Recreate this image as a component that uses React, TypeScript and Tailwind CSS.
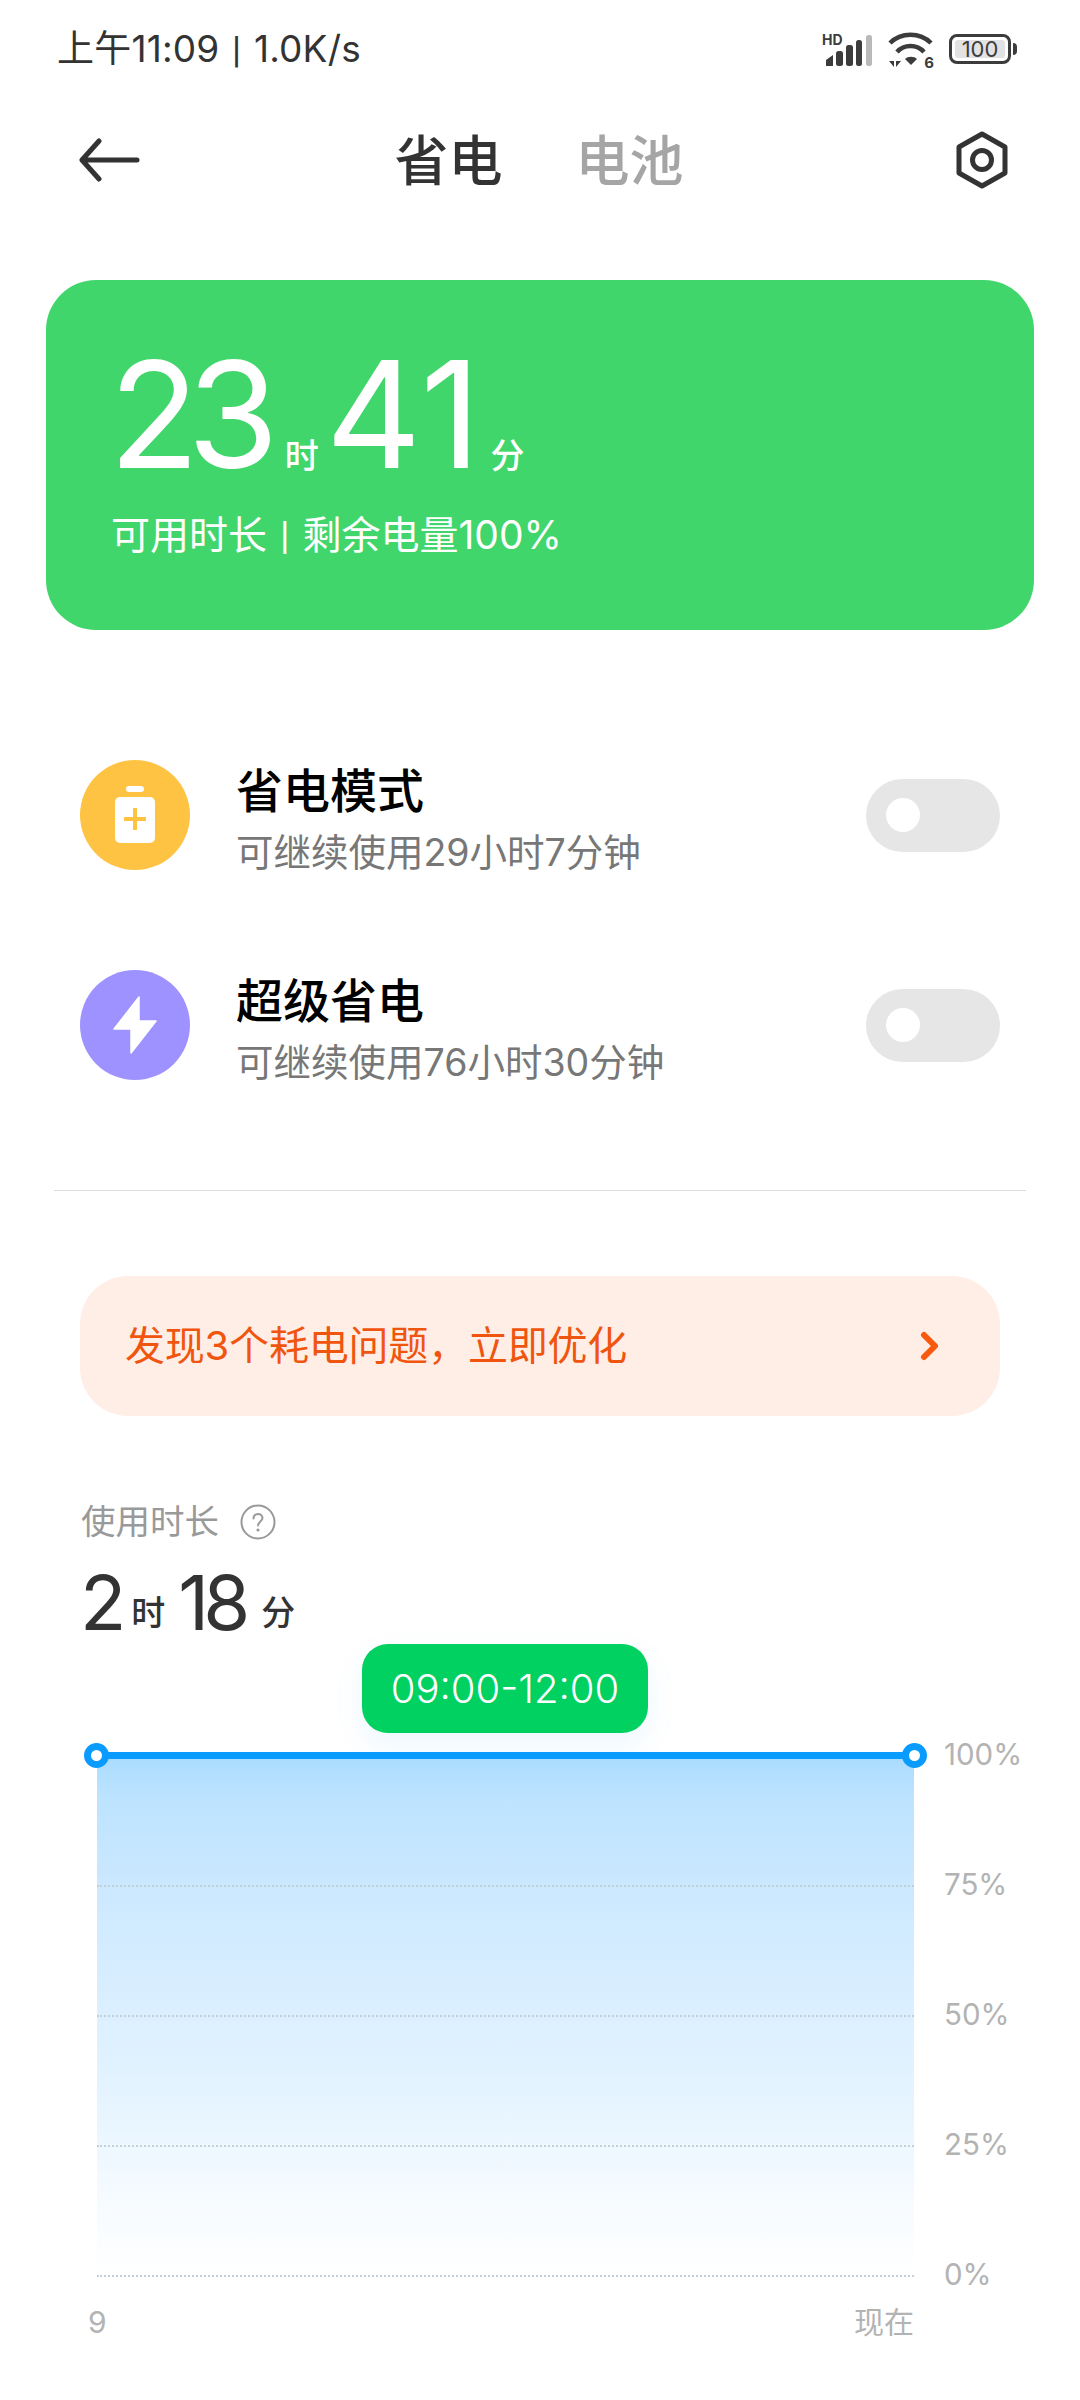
import React from "react";

const font = "font-['Inter','Noto_Sans_CJK_SC',sans-serif]";

function SignalIcon() {
  return (
    <svg width="48" height="31" viewBox="0 0 48 31" fill="none">
      <path d="M1 31V25L8 20V31Z" fill="#3c3c3c" />
      <rect x="11" y="16" width="7" height="15" rx="2.5" fill="#3c3c3c" />
      <rect x="21" y="10" width="7" height="21" rx="2.5" fill="#3c3c3c" />
      <rect x="31" y="5" width="6" height="26" rx="2.5" fill="#3c3c3c" />
      <rect x="41" y="0" width="6" height="31" rx="2.5" fill="#b9b9b9" />
    </svg>
  );
}

function WifiIcon() {
  return (
    <svg width="46" height="36" viewBox="0 0 46 36" fill="none">
      <path d="M2 11C13 0 32 0 43 11" stroke="#3c3c3c" strokeWidth="4.5" />
      <path d="M9 20C16 12 29 12 36 20" stroke="#3c3c3c" strokeWidth="4.5" />
      <path d="M17 27C20 24 26 24 29 27L23 33Z" fill="#3c3c3c" />
      <path d="M6 24V35L1 29H6ZM8 24V35L13 29H8Z" fill="#3c3c3c" />
    </svg>
  );
}

function Battery() {
  return (
    <div className="flex items-center gap-[2px]">
      <div className="flex h-[30px] w-[62px] items-center justify-center rounded-[8px] border-[3px] border-[#3c3c3c] p-[3px]">
        <div className="flex h-full w-full items-center justify-center rounded-[3px] bg-[#e2e2e2] text-[22px] leading-none text-[#3c3c3c]">
          100
        </div>
      </div>
      <div className="h-[12px] w-[4px] rounded-r-full bg-[#3c3c3c]" />
    </div>
  );
}

function Bar() {
  return <span className="mx-[2px] font-['Roboto'] font-normal">|</span>;
}

function StatusBar() {
  return (
    <div className="flex h-[98px] items-center justify-between pl-[57px] pr-[63px] text-[37px] text-[#333]">
      <span className="whitespace-pre tracking-[0.2px]">
        上午11:09 <Bar /> 1.0K/s
      </span>
      <div className="flex items-center">
        <div className="relative mr-[13px] mt-[3px] h-[31px] w-[50px]">
          <SignalIcon />
          <span className="absolute left-[-3px] top-[-3px] text-[14px] font-bold leading-[16px] text-[#3c3c3c]">HD</span>
        </div>
        <div className="relative mr-[15px] mt-[1px] h-[36px] w-[46px]">
          <WifiIcon />
          <span className="absolute bottom-[-2px] right-[0px] text-[15px] font-bold leading-none text-[#3c3c3c]">6</span>
        </div>
        <Battery />
      </div>
    </div>
  );
}

function Header() {
  return (
    <div className="relative flex h-[124px] items-center justify-center text-[54px] font-medium leading-none">
      <svg className="absolute left-[78px] top-[40px]" width="62" height="44" viewBox="0 0 62 44" fill="none">
        <path d="M59 22H4M21 3L4 22L21 41" stroke="#333" strokeWidth="5" strokeLinecap="round" strokeLinejoin="round" />
      </svg>
      <div className="mr-[2px] mt-[4px] flex gap-[73px]">
        <span className="text-[#333]">省电</span>
        <span className="text-[#a5a5a5]">电池</span>
      </div>
      <svg className="absolute left-[955px] top-[33px]" width="54" height="58" viewBox="0 0 54 58" fill="none">
        <path d="M27 3L50 16V42L27 55L4 42V16Z" stroke="#333" strokeWidth="5" strokeLinejoin="round" />
        <circle cx="27" cy="29" r="9.5" stroke="#333" strokeWidth="5" />
      </svg>
    </div>
  );
}

function BatteryCard() {
  return (
    <div className="mx-[46px] mt-[58px] h-[350px] rounded-[50px] bg-[#41d66b] pl-[63px] pt-[60px] text-white">
      <div className="flex h-[150px] items-end">
        <span className="text-[148px] font-normal leading-[150px] tracking-[-12px]">23</span>
        <span className="mb-[17px] ml-[18px] text-[34px] font-medium leading-none">时</span>
        <span className="ml-[7px] text-[148px] font-normal leading-[150px] tracking-[2px]">41</span>
        <span className="mb-[17px] ml-[8px] text-[34px] font-medium leading-none">分</span>
      </div>
      <p className="ml-[2px] mt-[20px] whitespace-pre text-[39px] leading-[50px]">
        可用时长 <Bar /> 剩余电量100%
      </p>
    </div>
  );
}

function SwitchOff() {
  return (
    <div className="flex h-[73px] w-[134px] items-center rounded-full bg-[#e6e6e6] pl-[20px]">
      <div className="h-[34px] w-[34px] rounded-full bg-white" />
    </div>
  );
}

function ModeRow({ icon, color, title, sub }: { icon: React.ReactNode; color: string; title: string; sub: string }) {
  return (
    <div className="flex h-[210px] items-center pl-[80px] pr-[80px]">
      <div className={`flex h-[110px] w-[110px] items-center justify-center rounded-full ${color}`}>{icon}</div>
      <div className="ml-[46px] flex-1 pt-[8px]">
        <p className="text-[47px] font-medium leading-[62px] text-black">{title}</p>
        <p className="mt-[6px] text-[37.5px] leading-[50px] text-[#777]">{sub}</p>
      </div>
      <SwitchOff />
    </div>
  );
}

function Chart() {
  const rows = ["100%", "75%", "50%", "25%", "0%"];
  return (
    <div className="relative mt-[3px] pl-[97px]">
      <div className="absolute left-[97px] top-[20px] h-[520px] w-[817px] bg-[linear-gradient(to_bottom,#a9dcff_0%,#bde3ff_8%,#cfeaff_30%,#e5f4ff_66%,#f6fbff_85%,#ffffff_100%)]" />
      <div className="relative flex flex-col gap-[90px]">
        {rows.map((r) => (
          <div key={r} className="flex h-[40px] items-center">
            <div className="h-0 w-[817px] border-t-2 border-dotted border-[#c3d0d8]" />
            <span className="ml-[30px] mt-[-2px] text-[29.5px] leading-none text-[#b3b3b3]">{r}</span>
          </div>
        ))}
      </div>
      <div className="absolute left-[97px] top-[16px] h-[7px] w-[817px] bg-[#0a9bff]" />
      <div className="absolute left-[84px] top-[7px] h-[25px] w-[25px] rounded-full border-[7px] border-[#0a9bff] bg-white" />
      <div className="absolute left-[902px] top-[7px] h-[25px] w-[25px] rounded-full border-[7px] border-[#0a9bff] bg-white" />
    </div>
  );
}

export default function App() {
  return (
    <div className={`h-[2400px] w-[1080px] overflow-hidden bg-white ${font}`}>
      <StatusBar />
      <Header />
      <BatteryCard />

      <div className="mt-[80px]">
        <ModeRow
          color="bg-[#ffc343]"
          title="省电模式"
          sub="可继续使用29小时7分钟"
          icon={
            <svg width="42" height="58" viewBox="0 0 42 58" fill="none">
              <rect x="12" y="0" width="18" height="6" rx="3" fill="#fff" />
              <path fillRule="evenodd" clipRule="evenodd" d="M6 11H36a5 5 0 0 1 5 5V52a5 5 0 0 1-5 5H6a5 5 0 0 1-5-5V16a5 5 0 0 1 5-5ZM19 22V31H10V35H19V44H23V35H32V31H23V22Z" fill="#fff" />
            </svg>
          }
        />
        <ModeRow
          color="bg-[#9d92ff]"
          title="超级省电"
          sub="可继续使用76小时30分钟"
          icon={
            <svg width="44" height="58" viewBox="0 0 44 58" fill="none">
              <path d="M26 1L1 33H18V57L43 25H26Z" fill="#fff" stroke="#fff" strokeWidth="1.5" strokeLinejoin="round" />
            </svg>
          }
        />
      </div>

      <div className="mx-[54px] mt-[60px] h-[1px] bg-[#dcdcdc]" />

      <div className="mx-[80px] mt-[85px] flex h-[140px] items-center justify-between rounded-[48px] bg-[#ffeee6] pl-[45px] pr-[60px]">
        <span className="text-[40px] leading-none tracking-[-0.2px] text-[#f0550f]">发现3个耗电问题，立即优化</span>
        <svg width="20" height="30" viewBox="0 0 20 30" fill="none">
          <path d="M4 4L15 15L4 26" stroke="#f8590f" strokeWidth="6" strokeLinecap="round" strokeLinejoin="round" />
        </svg>
      </div>

      <div className="ml-[81px] mt-[86px] flex h-[40px] items-center">
        <span className="text-[34.5px] leading-none text-[#999]">使用时长</span>
        <svg className="ml-[21px]" width="36" height="36" viewBox="0 0 36 36" fill="none">
          <circle cx="18" cy="18" r="16.5" stroke="#999" strokeWidth="2" />
          <path d="M13.5 14.5C13.5 8.5 22.5 8.5 22.5 14C22.5 17.5 18 17.5 18 21.5" stroke="#999" strokeWidth="2" strokeLinecap="round" />
          <circle cx="18" cy="26" r="1.6" fill="#999" />
        </svg>
      </div>

      <div className="ml-[80px] mt-[16px] flex h-[80px] items-end text-[#333]">
        <span className="text-[76px] font-normal leading-[72px] tracking-[-4px]">2</span>
        <span className="mb-[8px] ml-[9px] text-[34px] font-medium leading-none">时</span>
        <span className="ml-[13px] text-[76px] font-normal leading-[72px] tracking-[-6px]">18</span>
        <span className="mb-[8px] ml-[17px] text-[34px] font-medium leading-none">分</span>
      </div>

      <div className="ml-[362px] mt-[6px] flex h-[89px] w-[286px] items-center justify-center rounded-[26px] bg-[#00d161] text-[40px] font-light leading-none text-white shadow-[0_12px_30px_rgba(10,155,255,0.08)]">
        09:00-12:00
      </div>

      <Chart />

      <div className="mt-[6px] flex w-[914px] items-center justify-between pl-[88px] text-[30px] leading-[40px] text-[#b3b3b3]">
        <span>9</span>
        <span>现在</span>
      </div>
    </div>
  );
}
